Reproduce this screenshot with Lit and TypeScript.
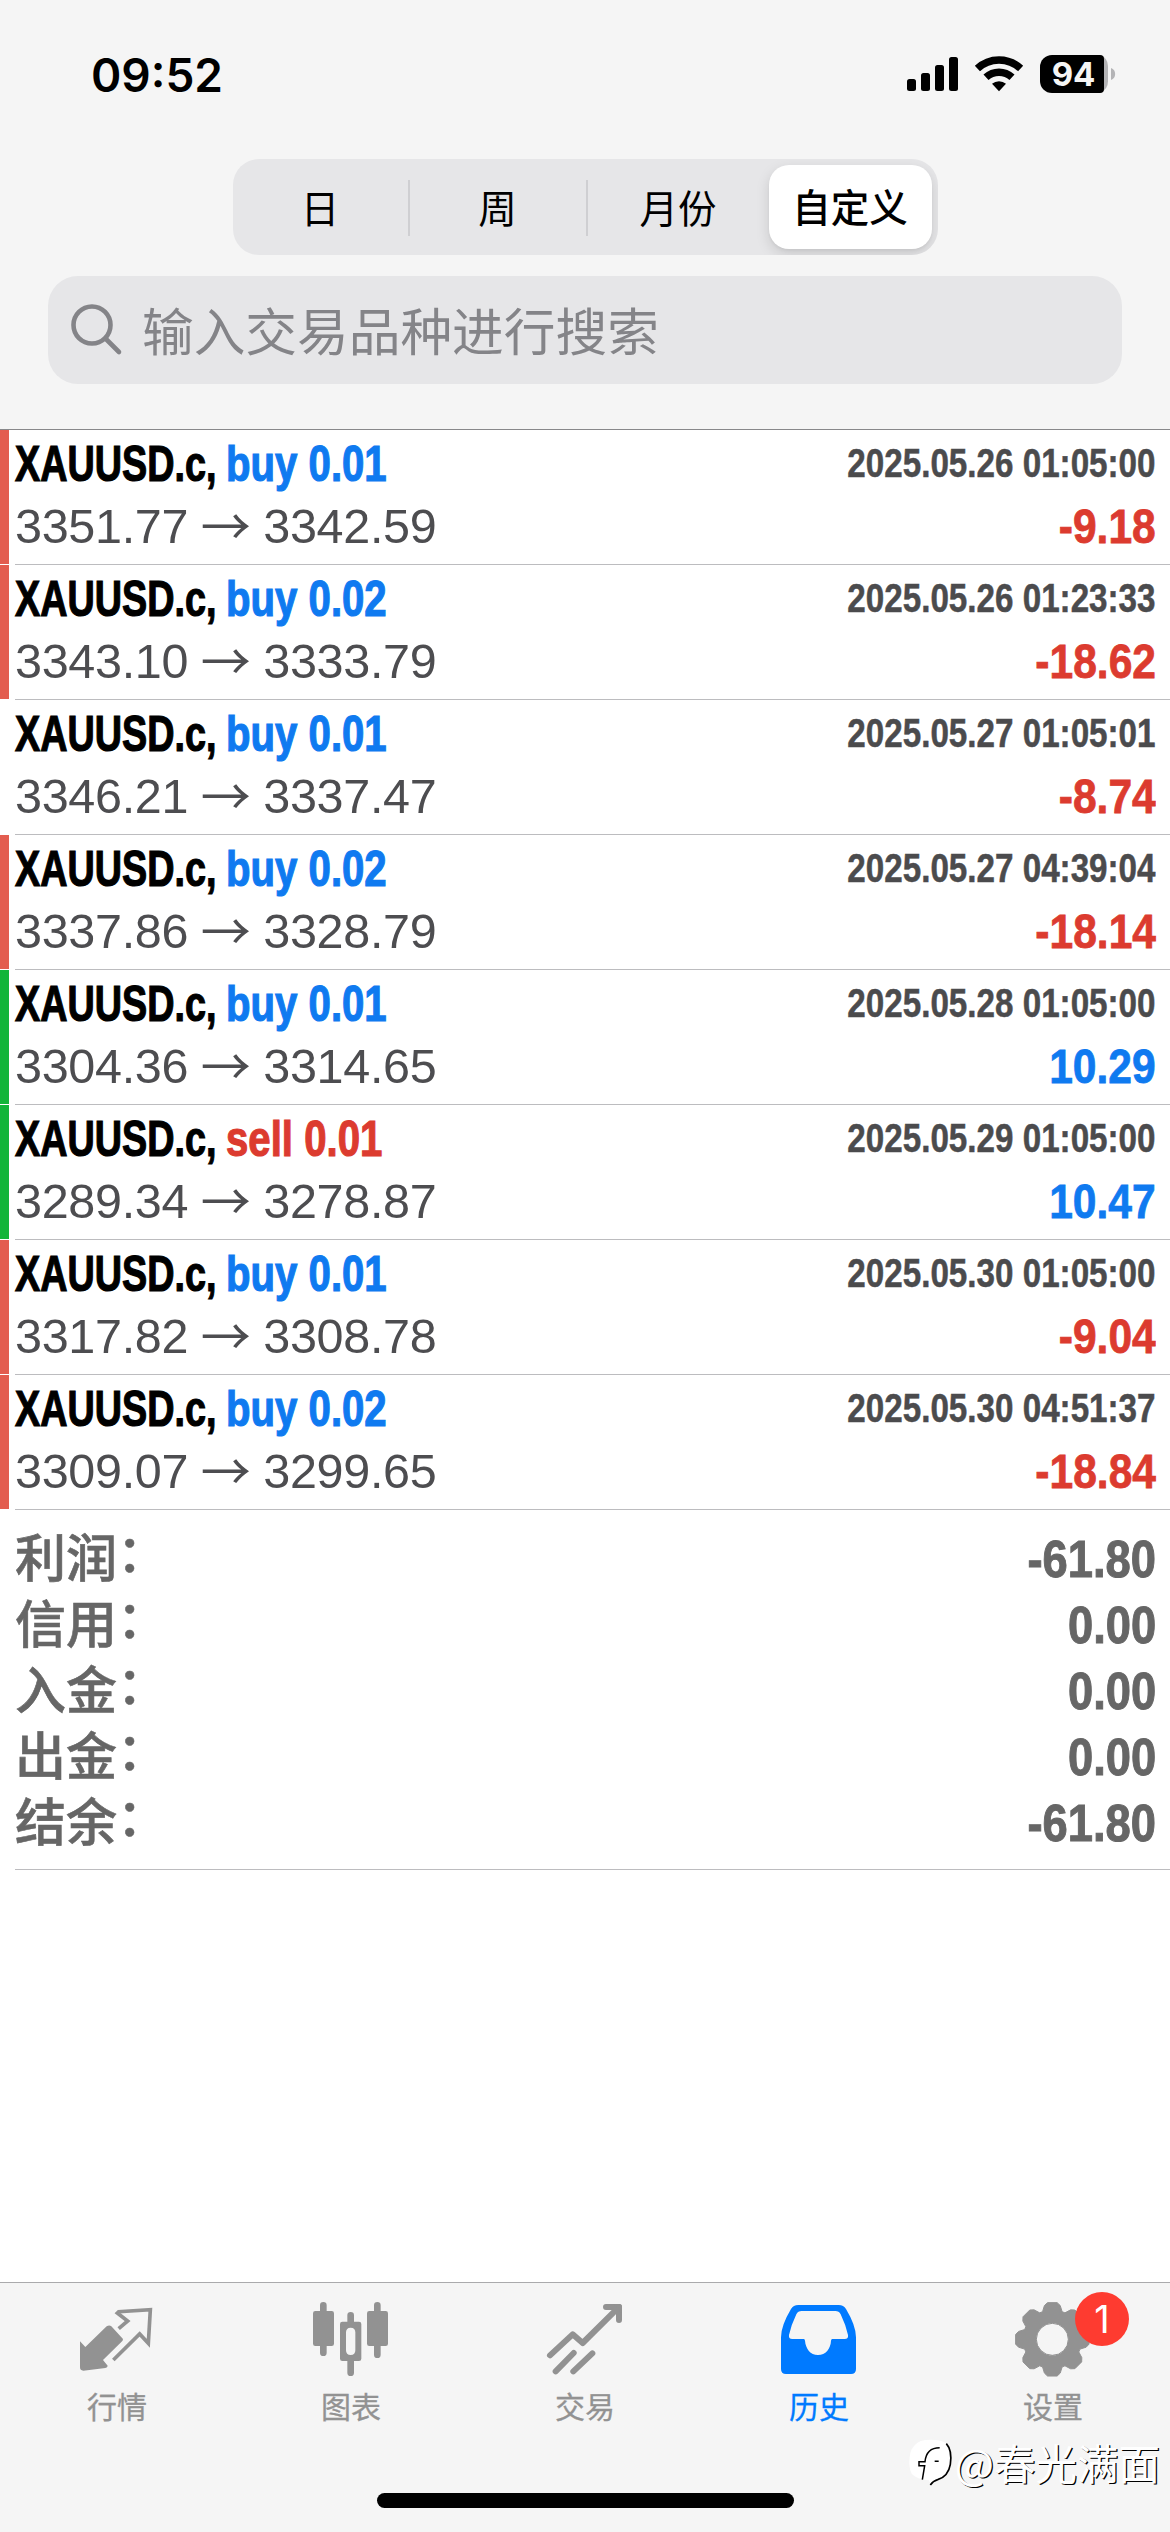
import { LitElement, html, svg, css } from "lit";
import { customElement } from "lit/decorators.js";
import { classMap } from "lit/directives/class-map.js";

interface Deal {
  side: "buy" | "sell";
  volume: string;
  open: string;
  close: string;
  time: string;
  profit: string;
  bar: "loss" | "gain" | "none";
}

const DEALS: Deal[] = [
  { side: "buy", volume: "0.01", open: "3351.77", close: "3342.59", time: "2025.05.26 01:05:00", profit: "-9.18", bar: "loss" },
  { side: "buy", volume: "0.02", open: "3343.10", close: "3333.79", time: "2025.05.26 01:23:33", profit: "-18.62", bar: "loss" },
  { side: "buy", volume: "0.01", open: "3346.21", close: "3337.47", time: "2025.05.27 01:05:01", profit: "-8.74", bar: "none" },
  { side: "buy", volume: "0.02", open: "3337.86", close: "3328.79", time: "2025.05.27 04:39:04", profit: "-18.14", bar: "loss" },
  { side: "buy", volume: "0.01", open: "3304.36", close: "3314.65", time: "2025.05.28 01:05:00", profit: "10.29", bar: "gain" },
  { side: "sell", volume: "0.01", open: "3289.34", close: "3278.87", time: "2025.05.29 01:05:00", profit: "10.47", bar: "gain" },
  { side: "buy", volume: "0.01", open: "3317.82", close: "3308.78", time: "2025.05.30 01:05:00", profit: "-9.04", bar: "loss" },
  { side: "buy", volume: "0.02", open: "3309.07", close: "3299.65", time: "2025.05.30 04:51:37", profit: "-18.84", bar: "loss" },
];

const TOTALS = [
  ["利润", "-61.80"],
  ["信用", "0.00"],
  ["入金", "0.00"],
  ["出金", "0.00"],
  ["结余", "-61.80"],
];

@customElement("status-bar")
class StatusBar extends LitElement {
  static styles = css`
    :host { display: flex; justify-content: space-between; height: 150px; padding: 0 54px 0 91px; box-sizing: border-box; }
    .time { font: 600 46px/150px Inter, sans-serif; color: #000; }
    .icons { width: 210px; height: 60px; margin-top: 44px; }
    .level { font: 700 33px Inter, sans-serif; fill: #f5f5f5; }
    .wave { fill: none; stroke: #000; stroke-width: 7.5; }
  `;
  render() {
    return html`
      <span class="time">09:52</span>
      <svg class="icons" viewBox="906 44 210 60">
        <rect x="907" y="79" width="9" height="12" rx="2.5" />
        <rect x="921" y="73" width="9" height="18" rx="2.5" />
        <rect x="935" y="65" width="9" height="26" rx="2.5" />
        <rect x="949" y="57" width="9" height="34" rx="2.5" />
        <path class="wave" d="M977.4 68.5a31.5 31.5 0 0 1 43.2 0" />
        <path class="wave" d="M986 77.3a19.3 19.3 0 0 1 26 0" />
        <path d="M992 83.8a10.5 10.5 0 0 1 14 0L999 91.2Z" />
        <path d="M1100 55a12 12 0 0 1 8 11.300v15a12 12 0 0 1-8 11.300z" fill="#b4b4b6" />
        <path d="M1052 55h48a4 4 0 0 1 4 4v30a4 4 0 0 1-4 4h-48a12 12 0 0 1-12-12V67a12 12 0 0 1 12-12Z" />
        <path d="M1111 68c5.500 1.500 5.500 10.500 0 12z" fill="#b4b4b6" />
        <text class="level" x="1073.500" y="85.700" text-anchor="middle">94</text>
      </svg>
    `;
  }
}

@customElement("range-picker")
class RangePicker extends LitElement {
  static styles = css`
    :host { display: grid; grid-template-columns: 177px 178px 181px 169px; width: 705px; height: 96px; margin: 9px auto 0; border-radius: 26px; background: #e6e6e8; overflow: hidden; }
    .option { display: flex; align-items: center; justify-content: center; font: 400 38.500px/1 "Noto Sans CJK SC", sans-serif; color: #000; padding-bottom: 4px; margin: 21px 0 19px; }
    .ruled { border-right: 2px solid #cfcfd2; }
    .active { margin: 6px 6px 6px 0; background: #fff; border-radius: 20px; font-weight: 500; box-shadow: 0 5px 14px rgba(0, 0, 0, 0.13), 0 2px 3px rgba(0, 0, 0, 0.04); }
  `;
  render() {
    return ["日", "周", "月份", "自定义"].map(
      (name, i) => html`<div class=${classMap({ option: true, ruled: i < 2, active: i === 3 })}>${name}</div>`,
    );
  }
}

@customElement("search-field")
class SearchField extends LitElement {
  static styles = css`
    :host { display: flex; align-items: center; height: 108px; margin: 21px 48px 0; padding-left: 22px; border-radius: 30px; background: #e6e6e8; box-sizing: border-box; }
    .glass { width: 54px; height: 54px; fill: none; stroke: #848488; stroke-width: 4.600; stroke-linecap: round; }
    .hint { margin-left: 18px; padding-bottom: 3px; font: 400 51.700px/1 "Noto Sans CJK SC", sans-serif; color: #848488; }
  `;
  render() {
    return html`
      <svg class="glass" viewBox="0 0 54 54"><circle cx="22" cy="22" r="18.500" /><path d="M35.500 35.500 49 49" /></svg>
      <span class="hint">输入交易品种进行搜索</span>
    `;
  }
}

@customElement("deal-row")
class DealRow extends LitElement {
  static properties = { deal: { attribute: false } };
  declare deal: Deal;
  static styles = css`
    :host { display: flex; height: 135px; font-family: "Liberation Sans", Arial, sans-serif; }
    .bar { width: 9px; height: 134px; margin-right: 6px; flex: none; }
    .loss { background: #e35d50; }
    .gain { background: #12b53a; }
    .body { flex: 1; display: grid; grid-template-rows: 67px 67px; border-bottom: 1px solid #bcbcbf; padding-right: 14px; }
    .line { display: flex; justify-content: space-between; white-space: pre; align-items: flex-start; }
    .title { width: 500px; display: flex; font-weight: 700; font-size: 50px; line-height: 68px; -webkit-text-stroke: 1.200px currentColor; }
    .symbol { width: 211px; flex: none; transform: scaleX(0.755); transform-origin: 0 0; color: #000; }
    .side { transform: scaleX(0.803); transform-origin: 0 0; }
    .blue { color: #0f7af0; }
    .red { color: #dc3b2f; }
    .time { font-weight: 700; font-size: 39.800px; line-height: 66px; color: #4b4b4d; transform: scaleX(0.834); transform-origin: 100% 0; -webkit-text-stroke: 0.5px currentColor; }
    .prices { display: flex; align-items: center; font-size: 48.500px; line-height: 58px; color: #4d4d50; letter-spacing: -0.3px; }
    .arrow { font-family: "Noto Sans CJK SC", sans-serif; font-weight: 400; font-size: 50px; line-height: 52px; padding-bottom: 6px; width: 75px; text-align: center; }
    .profit { font-weight: 700; font-size: 49px; line-height: 58px; transform: scaleX(0.868); transform-origin: 100% 0; -webkit-text-stroke: 0.8px currentColor; }
  `;
  render() {
    const d = this.deal;
    return html`
      <div class="bar ${d.bar}"></div>
      <div class="body">
        <div class="line">
          <div class="title">
            <span class="symbol">XAUUSD.c,</span>
            <span class="side ${d.side === "buy" ? "blue" : "red"}">${d.side} ${d.volume}</span>
          </div>
          <span class="time">${d.time}</span>
        </div>
        <div class="line">
          <div class="prices"><span>${d.open}</span><span class="arrow">→</span><span>${d.close}</span></div>
          <span class="profit ${d.profit.startsWith("-") ? "red" : "blue"}">${d.profit}</span>
        </div>
      </div>
    `;
  }
}

@customElement("account-totals")
class AccountTotals extends LitElement {
  static styles = css`
    :host { display: block; margin-left: 15px; padding: 17px 14px 12px 0; border-bottom: 1px solid #bcbcbf; color: #666; }
    .row { display: flex; justify-content: space-between; height: 66px; line-height: 66px; }
    .name { font: 500 51px/66px "Liberation Sans", "Noto Sans CJK SC", sans-serif; -webkit-text-stroke: 0.6px currentColor; }
    .colon { position: relative; top: -5px; left: 0; }
    .value { font: 700 51.500px/64px "Liberation Sans", Arial, sans-serif; transform: scaleX(0.88); transform-origin: 100% 0; -webkit-text-stroke: 1px currentColor; }
  `;
  render() {
    return TOTALS.map(
      ([name, value]) => html`<div class="row"><span class="name">${name}<span class="colon">：</span></span><span class="value">${value}</span></div>`,
    );
  }
}

const gearPath = () => {
  const pts: string[] = [];
  const cx = 547, cy = 208;
  for (let i = 0; i < 8; i++) {
    const a = (i * Math.PI) / 4;
    for (const [r, o] of [[88, -0.34], [104, -0.23], [111, -0.13], [111, 0.13], [104, 0.23], [88, 0.34]]) {
      pts.push(`${(cx + r * Math.sin(a + o)).toFixed(1)} ${(cy - r * Math.cos(a + o)).toFixed(1)}`);
    }
  }
  return `M${pts.join("L")}ZM595 208a48 48 0 1 0-96 0a48 48 0 1 0 96 0Z`;
};

const TABS = [
  {
    name: "行情",
    box: "105 81 252 252",
    art: svg`
      <path class="fill" d="M120 214 136 231 200 169q8-5 14 0l35 38q0 6-5 9L189 270l14 17q0 5-7 7l-66 8q-10 0-10-10Z" />
      <path class="line thin" d="M236 176 263 153 232 129 236 125 331 119 325 220 299 192 220 270" />`,
  },
  {
    name: "图表",
    box: "807 81 252 252",
    art: svg`
      <path class="line stick" d="M850 106V248M1012 106V254M932 136V160M932 270V308" />
      <rect class="fill" x="819" y="123" width="63" height="105" rx="7" />
      <rect class="fill" x="981" y="123" width="63" height="105" rx="7" />
      <path class="fill" fill-rule="evenodd" d="M907 155h50q7 0 7 7v104q0 7-7 7h-50q-7 0-7-7V162q0-7 7-7ZM932 173q-14 0-14 14v54q0 14 14 14t14-14v-54q0-14-14-14Z" />`,
  },
  {
    name: "交易",
    box: "129 81 252 252",
    art: svg`
      <path class="line" d="M150 256 218 193 248 219 352 116M318 111H357V150" />
      <path class="fill" d="M340 102h18q8 0 8 8v20z" />
      <path class="line" d="M167 304 221 249M220 304 277 250" />`,
  },
  {
    name: "历史",
    box: "831 81 252 252",
    art: svg`
      <path class="fill" fill-rule="evenodd" d="M895 105H1016Q1031 105 1038 117 1068 167 1068 202V297Q1068 312 1053 312H858Q843 312 843 297V202Q843 167 873 117 880 105 895 105ZM905 123Q894 123 889 133 874 164 867 195 865 207 877 207H911Q915 207 915 212C917 236 931 255 954 255S992 236 993 212Q993 207 997 207H1034Q1046 207 1044 195 1037 164 1022 133 1017 123 1006 123Z" />`,
  },
  {
    name: "设置",
    box: "423 81 252 252",
    badge: "1",
    art: svg`<path class="fill gear" fill-rule="evenodd" d=${gearPath()} />`,
  },
];

@customElement("tab-bar")
class TabBar extends LitElement {
  static styles = css`
    :host { display: grid; grid-template-columns: repeat(5, 1fr); height: 250px; box-sizing: border-box; border-top: 1px solid #aaaaac; background: #f5f5f5; position: relative; }
    .tab { display: flex; flex-direction: column; align-items: center; padding-top: 14px; color: #929292; position: relative; }
    .current { color: #007aff; }
    .icon { width: 84px; height: 84px; flex: none; }
    .fill { fill: currentColor; }
    .gear { stroke: currentColor; stroke-width: 3; stroke-linejoin: round; }
    .line { fill: none; stroke: currentColor; stroke-width: 18; stroke-linecap: round; stroke-linejoin: round; }
    .thin { stroke-width: 11; stroke-linecap: butt; stroke-linejoin: miter; }
    .stick { stroke-width: 20; }
    .label { margin-top: 5px; font: 400 30px/38px "Noto Sans CJK SC", sans-serif; -webkit-text-stroke: 0.3px currentColor; }
    .badge { position: absolute; left: 139px; top: 9px; width: 54px; height: 54px; border-radius: 50%; background: #fe3b30; color: #fff; text-align: center; font: 400 38px/54px Inter, sans-serif; }
    .home { position: absolute; left: 377px; bottom: 24px; width: 417px; height: 15px; border-radius: 8px; background: #000; }
    .mark { position: absolute; right: 10px; top: 152px; display: flex; align-items: center; color: #fff; font: 400 41.500px/48px "Noto Sans CJK SC", sans-serif; text-shadow: 1.300px 1.300px 0.500px #000; }
    .logo { width: 48px; height: 54px; }
  `;
  render() {
    return html`
      ${TABS.map(
        (t) => html`
          <div class=${classMap({ tab: true, current: t.name === "历史" })}>
            <svg class="icon" viewBox=${t.box}>${t.art}</svg>
            <span class="label">${t.name}</span>
            ${t.badge ? html`<span class="badge">${t.badge}</span>` : ""}
          </div>
        `,
      )}
      <div class="home"></div>
      <div class="mark">
        <svg class="logo" viewBox="0 0 144 162">
          <path d="M24 30Q36 14 70 14 106 14 118 26 132 42 130 72 130 120 88 136L72 150 66 136Q30 134 14 116 4 96 8 66 10 42 24 30Z" fill="#fff" />
          <path d="M118 26Q136 46 130 88 124 124 92 134 78 138 70 150" fill="none" stroke="#000" stroke-width="5" />
          <path d="M46 134 53 92H36V80H54Q58 38 98 38M83 79H95" fill="none" stroke="#000" stroke-width="4.500" />
        </svg>
        <span>@春光满面</span>
      </div>
    `;
  }
}

@customElement("app-root")
class AppRoot extends LitElement {
  static styles = css`
    :host { display: flex; flex-direction: column; width: 1170px; height: 2532px; background: #fff; overflow: hidden; }
    .header { height: 430px; flex: none; box-sizing: border-box; background: #f5f5f5; border-bottom: 1px solid #88888a; }
    .content { flex: 1; }
  `;
  render() {
    return html`
      <div class="header">
        <status-bar></status-bar>
        <range-picker></range-picker>
        <search-field></search-field>
      </div>
      <div class="content">
        ${DEALS.map((deal) => html`<deal-row .deal=${deal}></deal-row>`)}
        <account-totals></account-totals>
      </div>
      <tab-bar></tab-bar>
    `;
  }
}
